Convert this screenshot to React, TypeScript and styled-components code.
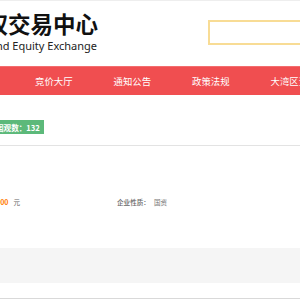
import styled, { createGlobalStyle } from 'styled-components'

const GlobalStyle = createGlobalStyle`
  html, body {
    margin: 0;
    padding: 0;
    background: #fff;
    overflow: hidden;
  }
  body {
    font-family: "Noto Sans CJK SC", "Noto Sans", sans-serif;
    color: #333;
  }
`

const Page = styled.div`
  width: 300px;
  height: 300px;
  overflow: hidden;
  display: flex;
  flex-direction: column;
`

const TopStrip = styled.div`
  height: 1px;
  flex-shrink: 0;
  background: #eeeeee;
`

const Header = styled.header`
  height: 65px;
  flex-shrink: 0;
  display: flex;
  align-items: flex-start;
`

const Logo = styled.div`
  width: 300px;
  margin-left: -202px;
  flex-shrink: 0;
  text-align: right;
  white-space: nowrap;
  padding-top: 8px;
`

const Title = styled.div`
  font-size: 22.5px;
  line-height: 28px;
  font-weight: 700;
  color: #111;
`

const Subtitle = styled.div`
  font-family: "Noto Sans", "Open Sans", sans-serif;
  font-size: 11px;
  line-height: 15px;
  color: #222;
  margin-top: 1px;
  padding-right: 1px;
`

const Search = styled.input`
  margin-left: 110px;
  margin-top: 19px;
  width: 200px;
  height: 25px;
  box-sizing: border-box;
  border: 2px solid #f8dc95;
  outline: none;
  flex-shrink: 0;
`

const Nav = styled.nav`
  height: 29px;
  flex-shrink: 0;
  background: #f04e50;
  border-top: 1px solid #f36d6e;
  box-sizing: border-box;
  display: flex;
  padding-left: 35px;
  gap: 41px;
  white-space: nowrap;
`

const NavItem = styled.a`
  flex-shrink: 0;
  display: flex;
  align-items: center;
  font-size: 9.4px;
  color: #fff;
  text-decoration: none;
`

const StatsBar = styled.div`
  height: 51px;
  flex-shrink: 0;
  display: flex;
  align-items: flex-start;
  border-bottom: 1px solid #e3e3e3;
  box-sizing: border-box;
  padding-top: 25px;
`

const Badge = styled.span`
  display: inline-flex;
  align-items: center;
  height: 14px;
  margin-left: -8px;
  padding: 0 4px;
  background: #5cb97a;
  color: #fff;
  font-size: 7.6px;
  font-weight: 700;
  white-space: nowrap;
`

const InfoRow = styled.div`
  height: 102px;
  flex-shrink: 0;
  display: flex;
  align-items: center;
  font-size: 6.6px;
  color: #666;
  white-space: nowrap;
  padding-top: 10px;
  box-sizing: border-box;
`

const PriceCell = styled.div`
  width: 220px;
  margin-left: -200px;
  flex-shrink: 0;
  text-align: right;
`

const Amount = styled.span<{ $accent?: boolean }>`
  color: ${({ $accent }) => ($accent ? '#ff7a00' : '#666')};
  font-weight: ${({ $accent }) => ($accent ? 700 : 400)};
  font-size: 7px;
  margin-right: 5px;
`

const NatureCell = styled.div`
  margin-left: 97px;
  display: flex;
  gap: 4px;
`

const Label = styled.span`
  color: #666;
  font-weight: 500;
`

const Value = styled.span`
  color: #777;
`

const Panel = styled.div`
  height: 35px;
  flex-shrink: 0;
  background: #f5f5f5;
`

const Footer = styled.div`
  height: 16px;
  flex-shrink: 0;
  border-bottom: 1px solid #d9d9d9;
  box-sizing: border-box;
`

const navItems = ['竞价大厅', '通知公告', '政策法规', '大湾区资讯']

export default function App() {
  return (
    <>
      <GlobalStyle />
      <Page>
        <TopStrip />
        <Header>
          <Logo>
            <Title>大湾区产权交易中心</Title>
            <Subtitle>Property Rights and Equity Exchange</Subtitle>
          </Logo>
          <Search type="text" />
        </Header>
        <Nav>
          {navItems.map((item) => (
            <NavItem key={item} href="#">
              {item}
            </NavItem>
          ))}
        </Nav>
        <StatsBar>
          <Badge>围观数：132</Badge>
        </StatsBar>
        <InfoRow>
          <PriceCell>
            <Label>起拍价：</Label>
            <Amount $accent>1,000,000.00</Amount>
            <span>元</span>
          </PriceCell>
          <NatureCell>
            <Label>企业性质：</Label>
            <Value>国资</Value>
          </NatureCell>
        </InfoRow>
        <Panel />
        <Footer />
      </Page>
    </>
  )
}
